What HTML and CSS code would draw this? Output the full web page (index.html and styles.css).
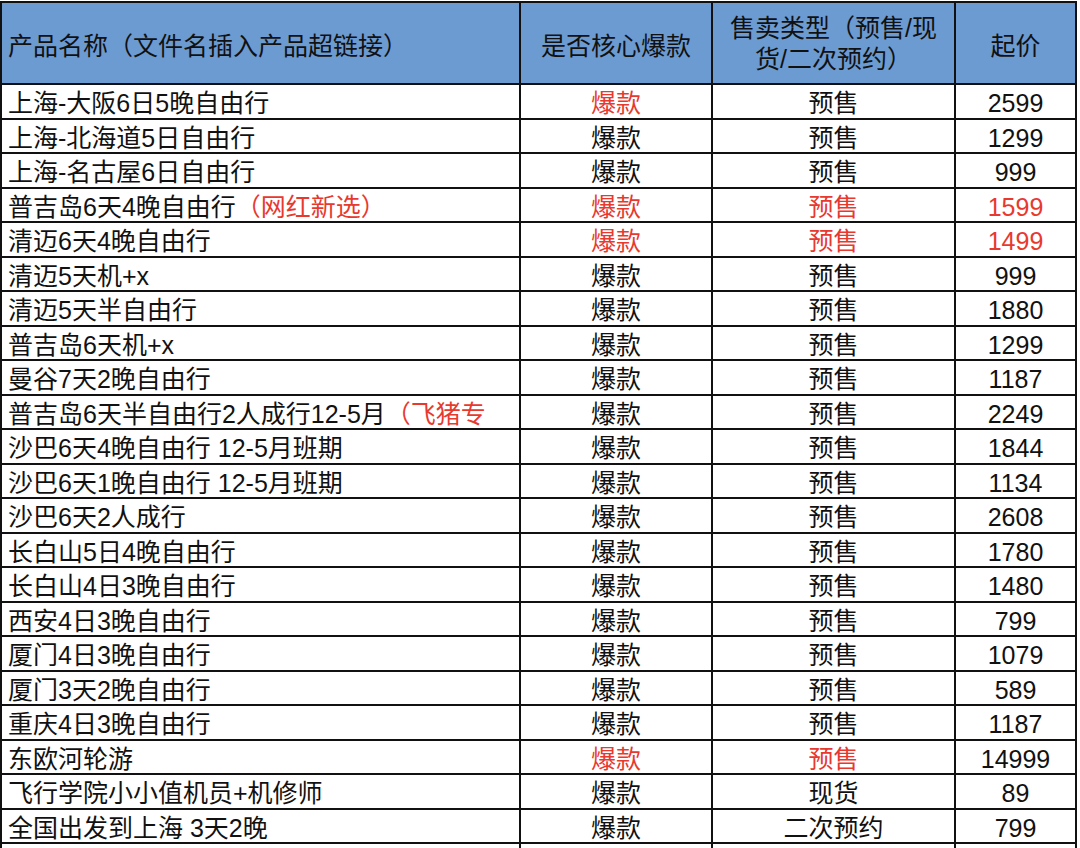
FILE: index.html
```html
<!DOCTYPE html>
<html lang="zh-CN">
<head>
<meta charset="utf-8">
<title>产品列表</title>
<link rel="stylesheet" href="styles.css">
</head>
<body>
<div class="sheet">
  <div class="hd left">产品名称（文件名插入产品超链接）</div>
  <div class="hd">是否核心爆款</div>
  <div class="hd two">售卖类型（预售/现<br>货/二次预约）</div>
  <div class="hd">起价</div>

  <div class="c left">上海-大阪6日5晚自由行</div><div class="c red">爆款</div><div class="c">预售</div><div class="c">2599</div>
  <div class="c left">上海-北海道5日自由行</div><div class="c">爆款</div><div class="c">预售</div><div class="c">1299</div>
  <div class="c left">上海-名古屋6日自由行</div><div class="c">爆款</div><div class="c">预售</div><div class="c">999</div>
  <div class="c left">普吉岛6天4晚自由行<span class="red">（网红新选）</span></div><div class="c red">爆款</div><div class="c red">预售</div><div class="c red">1599</div>
  <div class="c left">清迈6天4晚自由行</div><div class="c red">爆款</div><div class="c red">预售</div><div class="c red">1499</div>
  <div class="c left">清迈5天机+x</div><div class="c">爆款</div><div class="c">预售</div><div class="c">999</div>
  <div class="c left">清迈5天半自由行</div><div class="c">爆款</div><div class="c">预售</div><div class="c">1880</div>
  <div class="c left">普吉岛6天机+x</div><div class="c">爆款</div><div class="c">预售</div><div class="c">1299</div>
  <div class="c left">曼谷7天2晚自由行</div><div class="c">爆款</div><div class="c">预售</div><div class="c">1187</div>
  <div class="c left">普吉岛6天半自由行2人成行12-5月<span class="red">（飞猪专</span></div><div class="c">爆款</div><div class="c">预售</div><div class="c">2249</div>
  <div class="c left">沙巴6天4晚自由行 12-5月班期</div><div class="c">爆款</div><div class="c">预售</div><div class="c">1844</div>
  <div class="c left">沙巴6天1晚自由行 12-5月班期</div><div class="c">爆款</div><div class="c">预售</div><div class="c">1134</div>
  <div class="c left">沙巴6天2人成行</div><div class="c">爆款</div><div class="c">预售</div><div class="c">2608</div>
  <div class="c left">长白山5日4晚自由行</div><div class="c">爆款</div><div class="c">预售</div><div class="c">1780</div>
  <div class="c left">长白山4日3晚自由行</div><div class="c">爆款</div><div class="c">预售</div><div class="c">1480</div>
  <div class="c left">西安4日3晚自由行</div><div class="c">爆款</div><div class="c">预售</div><div class="c">799</div>
  <div class="c left">厦门4日3晚自由行</div><div class="c">爆款</div><div class="c">预售</div><div class="c">1079</div>
  <div class="c left">厦门3天2晚自由行</div><div class="c">爆款</div><div class="c">预售</div><div class="c">589</div>
  <div class="c left">重庆4日3晚自由行</div><div class="c">爆款</div><div class="c">预售</div><div class="c">1187</div>
  <div class="c left">东欧河轮游</div><div class="c red">爆款</div><div class="c red">预售</div><div class="c">14999</div>
  <div class="c left">飞行学院小小值机员+机修师</div><div class="c">爆款</div><div class="c">现货</div><div class="c">89</div>
  <div class="c left">全国出发到上海 3天2晚</div><div class="c">爆款</div><div class="c">二次预约</div><div class="c">799</div>
  <div class="c left"></div><div class="c"></div><div class="c"></div><div class="c"></div>
</div>
</body>
</html>
```

FILE: styles.css
```css
html, body {
  margin: 0;
  padding: 0;
  background: #ffffff;
  overflow: hidden;
}

body {
  width: 1080px;
  height: 848px;
  font-family: "Liberation Sans", "Noto Sans CJK SC", sans-serif;
  font-size: 25px;
  color: #111111;
}

.sheet {
  margin-top: 1px;
  width: 1077px;
  box-sizing: border-box;
  display: grid;
  grid-template-columns: 517px 190px 241px 119px;
  grid-template-rows: 80px repeat(23, 32.5px);
  gap: 2px;
  padding: 2px 2px 0 2px;
  background: #111111;
}

.hd {
  background: #6c9bd2;
  display: flex;
  align-items: center;
  justify-content: center;
  text-align: center;
  white-space: nowrap;
  padding-top: 2px;
  box-sizing: border-box;
}

.hd.left {
  justify-content: flex-start;
  padding-left: 6px;
}

.hd.two {
  line-height: 31px;
}

.c {
  background: #ffffff;
  line-height: 32.5px;
  text-align: center;
  white-space: nowrap;
  overflow: hidden;
  padding-top: 2px;
  box-sizing: border-box;
}

.c.left {
  text-align: left;
  padding-left: 6px;
}

.red {
  color: #e8392f;
}
```
